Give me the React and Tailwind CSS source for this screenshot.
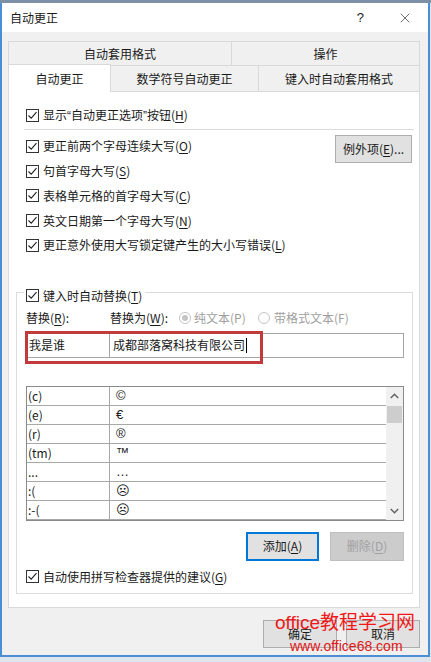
import { X } from 'lucide-react';

const rows = [
  ['(c)', '©'],
  ['(e)', '€'],
  ['(r)', '®'],
  ['(tm)', '™'],
  ['...', '…'],
  [':(', '☹'],
  [':-(', '☹'],
];

function Acc({ text, k, tail = '' }) {
  return (
    <span className="whitespace-nowrap leading-none">
      {text}(<span className="underline underline-offset-2">{k}</span>){tail}
    </span>
  );
}

function Box() {
  return (
    <span className="w-[13px] h-[13px] border border-[#333] bg-white flex items-center justify-center shrink-0">
      <svg width="11" height="11" viewBox="0 0 11 11">
        <path d="M1.5 5.5 L4.2 8.2 L9.5 2.2" fill="none" stroke="#222" strokeWidth="1.1" />
      </svg>
    </span>
  );
}

function CheckRow({ text, k, className = '' }) {
  return (
    <div className={`flex items-center gap-[4px] ${className}`}>
      <Box />
      <Acc text={text} k={k} />
    </div>
  );
}

function Radio({ on }) {
  return (
    <span className="w-[12px] h-[12px] rounded-full border border-[#c4c4c4] bg-white flex items-center justify-center shrink-0">
      {on && <span className="w-[6px] h-[6px] rounded-full bg-[#c4c4c4]" />}
    </span>
  );
}

function Chevron({ up }) {
  return (
    <svg width="9" height="6" viewBox="0 0 9 6">
      <path d={up ? 'M0.8 5 L4.5 1.2 L8.2 5' : 'M0.8 1 L4.5 4.8 L8.2 1'} fill="none" stroke="#606060" strokeWidth="1.4" />
    </svg>
  );
}

export default function App() {
  return (
    <div className="relative w-[431px] h-[662px] bg-[#dfe5ec] overflow-hidden text-[12px] text-[#1a1a1a] font-['Noto_Sans_CJK_SC','Liberation_Sans',sans-serif]">
      <div className="h-[3px] bg-[#7d90a6]" />
      <div className="w-[430px] h-[654px] border-x-2 border-b-2 border-[#4a8ed4] bg-[#f0f0f0] flex flex-col">
        {/* title bar */}
        <div className="h-[29px] bg-white flex items-center pl-[8px] pr-[15px] shrink-0">
          <span className="leading-none">自动更正</span>
          <span className="ml-auto mr-[33px] text-[13px] leading-none text-[#222] font-['Liberation_Sans',sans-serif]">?</span>
          <X size={16} strokeWidth={1} className="text-[#222]" />
        </div>

        <div className="flex-1 flex flex-col pt-[9px] pl-[6px] pr-[8px]">
          {/* tabs back row */}
          <div className="flex h-[24px]">
            <div className="w-[224px] border-t border-x border-[#d9d9d9] flex items-center justify-center leading-none">自动套用格式</div>
            <div className="flex-1 border-t border-r border-[#d9d9d9] flex items-center justify-center leading-none">操作</div>
          </div>
          {/* tabs front row */}
          <div className="flex items-end h-[27px]">
            <div className="w-[103px] h-[28px] bg-white border-t border-x border-[#d9d9d9] flex items-center justify-center leading-none">自动更正</div>
            <div className="w-[148px] h-[27px] border-t border-r border-b border-[#d9d9d9] flex items-center justify-center leading-none">数学符号自动更正</div>
            <div className="flex-1 h-[27px] border-t border-r border-b border-[#d9d9d9] flex items-center justify-center leading-none">键入时自动套用格式</div>
          </div>

          {/* panel */}
          <div className="bg-white border-x border-b border-[#d9d9d9] pt-[13px] pb-[13px]">
            <div className="h-[20px] pl-[17px] flex items-center gap-[4px]">
              <Box />
              <span className="whitespace-nowrap leading-none">
                显示<span className="font-['Liberation_Sans',sans-serif]">“</span>自动更正选项<span className="font-['Liberation_Sans',sans-serif]">”</span>按钮(<span className="underline underline-offset-2">H</span>)
              </span>
            </div>
            <div className="h-px bg-[#dadada] mt-[4px] ml-[15px] mr-[5px]" />

            <div className="flex mt-[4px]">
              <div className="flex-1 flex flex-col pl-[17px]">
                <CheckRow text="更正前两个字母连续大写" k="O" className="h-[24.75px]" />
                <CheckRow text="句首字母大写" k="S" className="h-[24.75px]" />
                <CheckRow text="表格单元格的首字母大写" k="C" className="h-[24.75px]" />
                <CheckRow text="英文日期第一个字母大写" k="N" className="h-[24.75px]" />
                <CheckRow text="更正意外使用大写锁定键产生的大小写错误" k="L" className="h-[24.75px]" />
              </div>
              <div className="mt-[1px] mr-[7px] w-[77px] h-[28px] bg-[#e1e1e1] border border-[#adadad] flex items-center justify-center">
                <Acc text="例外项" k="E" tail="..." />
              </div>
            </div>

            {/* group box */}
            <div className="relative mt-[34px] ml-[7px] mr-[6px] border border-[#dcdcdc] pb-[6px]">
              <div className="-mt-[7px] ml-[7px] pl-[2px] pr-[3px] w-fit bg-white h-[20px] flex items-center gap-[4px]">
                <Box />
                <Acc text="键入时自动替换" k="T" />
              </div>

              <div className="mt-[2px] h-[20px] flex items-center pl-[9px]">
                <span className="w-[84px]"><Acc text="替换" k="R" tail=":" /></span>
                <span className="w-[69px]"><Acc text="替换为" k="W" tail=":" /></span>
                <span className="w-[79px] flex items-center gap-[3px] text-[#a0a0a0]">
                  <Radio on />
                  <span className="leading-none">纯文本(P)</span>
                </span>
                <span className="flex items-center gap-[4px] text-[#a0a0a0]">
                  <Radio />
                  <span className="leading-none">带格式文本(F)</span>
                </span>
              </div>

              <div className="mt-[5px] ml-[9px] mr-[8px] h-[25px] flex">
                <div className="w-[84px] border border-[#a5a5a5] flex items-center pl-[2px] leading-none">我是谁</div>
                <div className="flex-1 -ml-px border border-[#a5a5a5] flex items-center pl-[3px] leading-none">
                  成都部落窝科技有限公司
                  <span className="w-px h-[15px] bg-black ml-px" />
                </div>
              </div>

              {/* list */}
              <div className="mt-[28px] ml-[9px] mr-[8px] h-[135px] border border-[#8a8a8a] flex">
                <div className="flex-1 flex flex-col">
                  {rows.map(([a, b], i) => (
                    <div key={i} className="h-[19px] flex border-b border-[#a8a8a8] leading-none">
                      <div className="w-[83px] border-r border-[#a8a8a8] flex items-center pl-[1px]">{a}</div>
                      <div className="flex-1 flex items-center pl-[6px] text-[13px] font-['Liberation_Sans','DejaVu_Sans',sans-serif]">{b}</div>
                    </div>
                  ))}
                </div>
                <div className="w-[17px] bg-[#f0f0f0] flex flex-col">
                  <div className="h-[19px] flex items-center justify-center"><Chevron up /></div>
                  <div className="h-[17px] mx-px bg-[#cdcdcd]" />
                  <div className="flex-1" />
                  <div className="h-[17px] flex items-center justify-center"><Chevron /></div>
                </div>
              </div>

              <div className="mt-[11px] mr-[8px] h-[29px] flex justify-end gap-[11px]">
                <div className="w-[73px] bg-[#e1e1e1] border-2 border-[#0078d7] flex items-center justify-center">
                  <Acc text="添加" k="A" />
                </div>
                <div className="w-[74px] bg-[#cccccc] border border-[#bfbfbf] text-[#a0a0a0] flex items-center justify-center">
                  <Acc text="删除" k="D" />
                </div>
              </div>

              <CheckRow text="自动使用拼写检查器提供的建议" k="G" className="mt-[6px] h-[20px] pl-[9px]" />

              <div className="absolute left-[8px] top-[38px] w-[238px] h-[33px] border-[3px] border-[#c23b3c] pointer-events-none" />
            </div>
          </div>

          {/* dialog buttons */}
          <div className="mt-[12px] h-[28px] flex justify-end gap-[9px]">
            <div className="w-[74px] bg-[#e1e1e1] border border-[#adadad] flex items-center justify-center leading-none">确定</div>
            <div className="w-[74px] bg-[#e1e1e1] border border-[#adadad] flex items-center justify-center leading-none">取消</div>
          </div>
        </div>
      </div>

      {/* watermark */}
      <div className="absolute left-[275px] top-[613px] text-[19px] leading-none text-[#f01818] whitespace-nowrap font-['Liberation_Sans','Noto_Sans_CJK_SC',sans-serif]">
        office教程学习网
      </div>
      <div className="absolute left-[290px] top-[639px] text-[14px] leading-none text-[#e01515] whitespace-nowrap font-['Liberation_Sans',sans-serif]">
        www.office68.com
      </div>
    </div>
  );
}
